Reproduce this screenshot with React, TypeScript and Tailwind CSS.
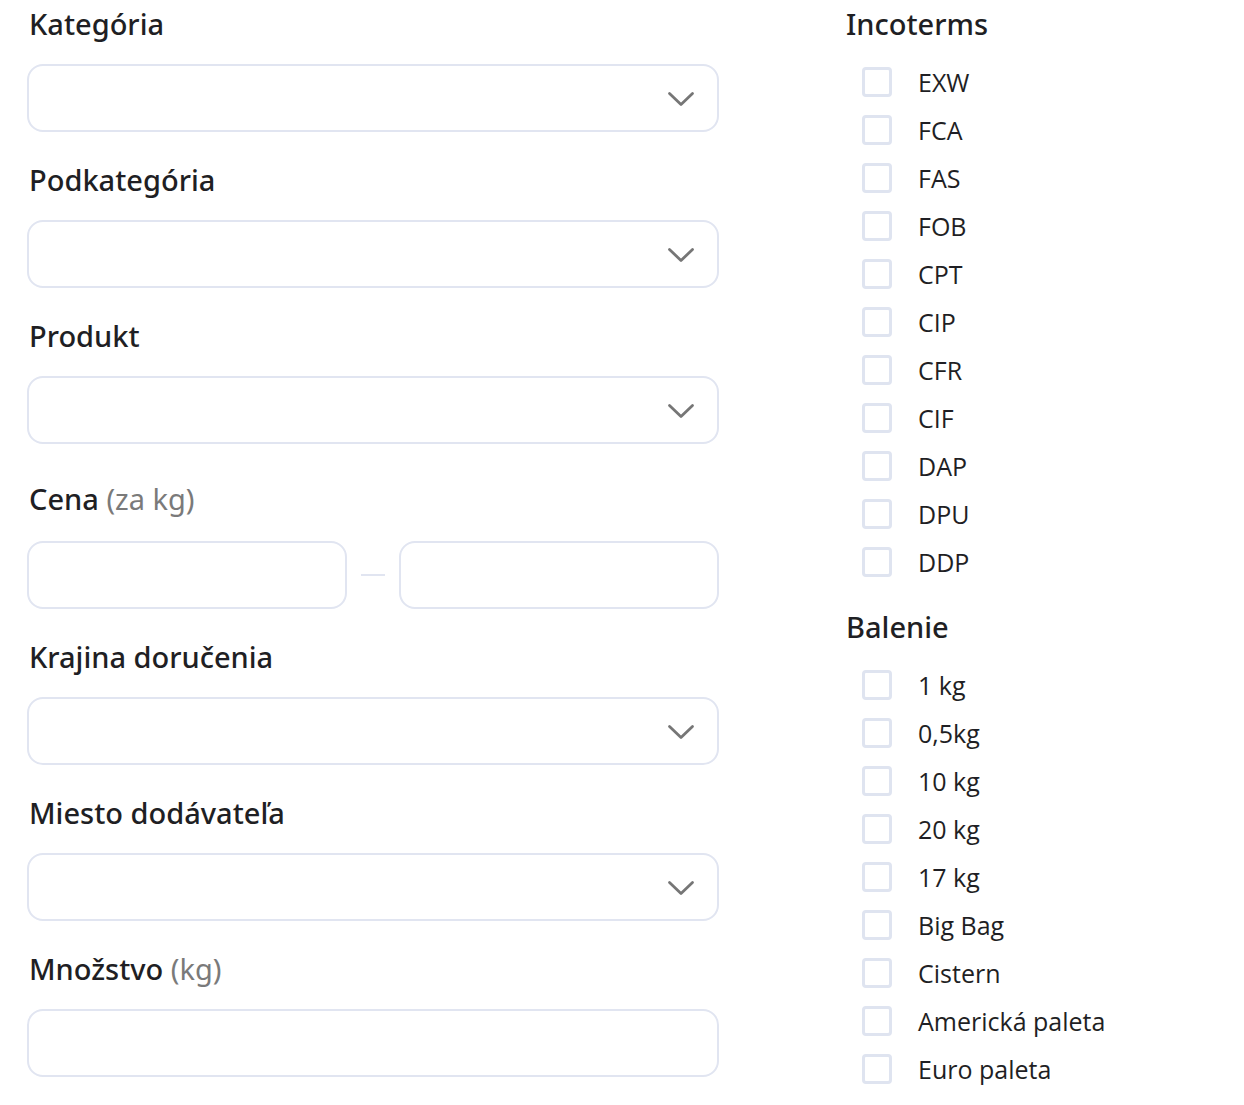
const incoterms = ["EXW", "FCA", "FAS", "FOB", "CPT", "CIP", "CFR", "CIF", "DAP", "DPU", "DDP"];
const balenie = ["1 kg", "0,5kg", "10 kg", "20 kg", "17 kg", "Big Bag", "Cistern", "Americká paleta", "Euro paleta"];

const heading = "font-['Noto_Sans',sans-serif] text-[29px] leading-[36px] font-medium text-[#1f1f24]";
const box = "h-[68px] rounded-[16px] border-2 border-[#e1e5f1] bg-white";

function Label({ text, unit }: { text: string; unit?: string }) {
  return (
    <div className={`${heading} pl-[2px]`}>
      {text}
      {unit ? <span className="font-normal text-[#7a7a7a]"> {unit}</span> : null}
    </div>
  );
}

function Select() {
  return (
    <div className={`${box} flex items-center justify-end pr-[22px]`}>
      <svg width="28" height="16" viewBox="0 0 28 16" fill="none" className="mt-[2px]">
        <path d="M2.5 2.5 L14 13.5 L25.5 2.5" stroke="#767676" strokeWidth="2.8" strokeLinecap="round" strokeLinejoin="round" />
      </svg>
    </div>
  );
}

function CheckList({ items }: { items: string[] }) {
  return (
    <ul className="mt-[25px] flex flex-col gap-[18px] pl-[16px]">
      {items.map((item) => (
        <li key={item} className="flex h-[30px] items-center gap-[26px]">
          <span className="h-[30px] w-[30px] shrink-0 rounded-[4px] border-[3px] border-[#dfe4f0] bg-white" />
          <span className="font-['Open_Sans',sans-serif] text-[25px] leading-[30px] text-[#1f1f24]">{item}</span>
        </li>
      ))}
    </ul>
  );
}

export default function App() {
  return (
    <div className="flex min-h-[1105px] bg-white pl-[27px] pt-[6px]">
      <div className="flex w-[692px] flex-col">
        <Label text="Kategória" />
        <div className="mt-[22px]"><Select /></div>

        <div className="mt-[30px]"><Label text="Podkategória" /></div>
        <div className="mt-[22px]"><Select /></div>

        <div className="mt-[30px]"><Label text="Produkt" /></div>
        <div className="mt-[22px]"><Select /></div>

        <div className="mt-[37px]"><Label text="Cena" unit="(za kg)" /></div>
        <div className="mt-[24px] flex items-center gap-[14px]">
          <div className={`${box} flex-1`} />
          <span className="h-[2px] w-[24px] bg-[#e1e5f1]" />
          <div className={`${box} flex-1`} />
        </div>

        <div className="mt-[30px]"><Label text="Krajina doručenia" /></div>
        <div className="mt-[22px]"><Select /></div>

        <div className="mt-[30px]"><Label text="Miesto dodávateľa" /></div>
        <div className="mt-[22px]"><Select /></div>

        <div className="mt-[30px]"><Label text="Množstvo" unit="(kg)" /></div>
        <div className={`${box} mt-[22px]`} />
      </div>

      <div className="ml-[127px] flex flex-col">
        <div className={heading}>Incoterms</div>
        <CheckList items={incoterms} />
        <div className={`${heading} mt-[32px]`}>Balenie</div>
        <CheckList items={balenie} />
      </div>
    </div>
  );
}
